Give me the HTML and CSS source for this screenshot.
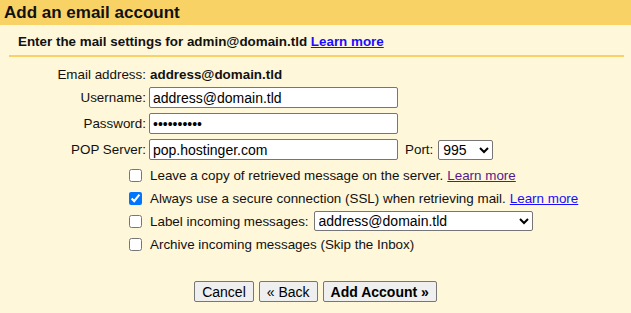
FILE: index.html
```html
<!DOCTYPE html>
<html lang="en">
<head>
    <meta charset="UTF-8">
    <meta name="viewport" content="width=device-width, initial-scale=1.0">
    <title>Add an email account</title>
    <link rel="stylesheet" href="styles.css">
</head>
<body>
    <div class="dialog">
        <h1 class="dialog-title">Add an email account</h1>
        <div class="intro">
            Enter the mail settings for admin@domain.tld <a href="#" class="link">Learn more</a>
        </div>

        <div class="settings">
            <div class="row row-email">
                <span class="label">Email address:</span>
                <span class="value">address@domain.tld</span>
            </div>
            <div class="row">
                <label class="label" for="username">Username:</label>
                <input class="field" type="text" id="username" value="address@domain.tld">
            </div>
            <div class="row">
                <label class="label" for="password">Password:</label>
                <input class="field" type="password" id="password" value="secretpass">
            </div>
            <div class="row">
                <label class="label" for="pop-server">POP Server:</label>
                <input class="field" type="text" id="pop-server" value="pop.hostinger.com">
                <label class="port-label" for="port">Port:</label>
                <select class="select port-select" id="port">
                    <option>995</option>
                    <option>110</option>
                </select>
            </div>
        </div>

        <div class="options">
            <div class="option">
                <input type="checkbox" id="leave-copy">
                <label for="leave-copy">Leave a copy of retrieved message on the server.</label>
                <a href="#" class="link visited">Learn more</a>
            </div>
            <div class="option">
                <input type="checkbox" id="ssl" checked>
                <label for="ssl">Always use a secure connection (SSL) when retrieving mail.</label>
                <a href="#" class="link">Learn more</a>
            </div>
            <div class="option">
                <input type="checkbox" id="label-incoming">
                <label for="label-incoming">Label incoming messages:</label>
                <select class="select label-select">
                    <option>address@domain.tld</option>
                </select>
            </div>
            <div class="option">
                <input type="checkbox" id="archive">
                <label for="archive">Archive incoming messages (Skip the Inbox)</label>
            </div>
        </div>

        <div class="actions">
            <button class="btn">Cancel</button>
            <button class="btn">&laquo; Back</button>
            <button class="btn btn-primary">Add Account &raquo;</button>
        </div>
    </div>
</body>
</html>
```

FILE: styles.css
```css
body {
    font-family: Arial, "Liberation Sans", sans-serif;
    font-size: 13.4px;
    color: #111;
    margin: 0;
    padding: 0;
    background-color: #fff7d9;
}

.dialog {
    height: 313px;
}

.dialog-title {
    margin: 0;
    height: 25px;
    padding-left: 4px;
    font-size: 17px;
    line-height: 25px;
    background-color: #f9d266;
}

.intro {
    margin: 0 7px 0 9px;
    padding: 9px 9px 6px;
    font-weight: bold;
    line-height: 15px;
    border-bottom: 2px solid #f9d266;
}

.link {
    color: #1a0dff;
}

.link.visited {
    color: #551a8b;
}

.settings {
    padding: 7px 0 0 8px;
}

.row {
    display: flex;
    align-items: center;
    height: 21px;
    margin-bottom: 5px;
}

.row-email {
    margin-bottom: 2px;
}

.label {
    width: 138px;
    margin-right: 3px;
    text-align: right;
}

.value {
    font-weight: bold;
    padding-left: 1px;
}

.field {
    box-sizing: border-box;
    width: 249px;
    height: 21px;
    margin: 0;
    padding: 0 3px;
    font-family: inherit;
    font-size: 14px;
    border: 1px solid #767676;
    border-radius: 2px;
    background: #fff;
}

.port-label {
    margin: 0 5px 0 7px;
}

.select {
    box-sizing: border-box;
    height: 20px;
    margin: 0;
    font-family: inherit;
    font-size: 14px;
    color: #000;
    background: #fff;
    border: 1px solid #767676;
    border-radius: 2px;
}

.port-select {
    width: 55px;
}

.label-select {
    width: 219px;
    margin-left: 5px;
}

.options {
    padding: 0 0 0 129px;
}

.option {
    display: flex;
    align-items: center;
    height: 20px;
    margin-bottom: 3px;
}

.option input {
    width: 13px;
    height: 13px;
    margin: 0 8px 0 0;
}

.option .link {
    margin-left: 4px;
}

.actions {
    display: flex;
    justify-content: center;
    gap: 5px;
    margin-top: 27px;
}

.btn {
    height: 21px;
    padding: 0 7px;
    font-family: inherit;
    font-size: 14px;
    color: #000;
    background-color: #efefef;
    border: 1px solid #767676;
    border-radius: 2px;
}

.btn-primary {
    font-weight: bold;
}
```
